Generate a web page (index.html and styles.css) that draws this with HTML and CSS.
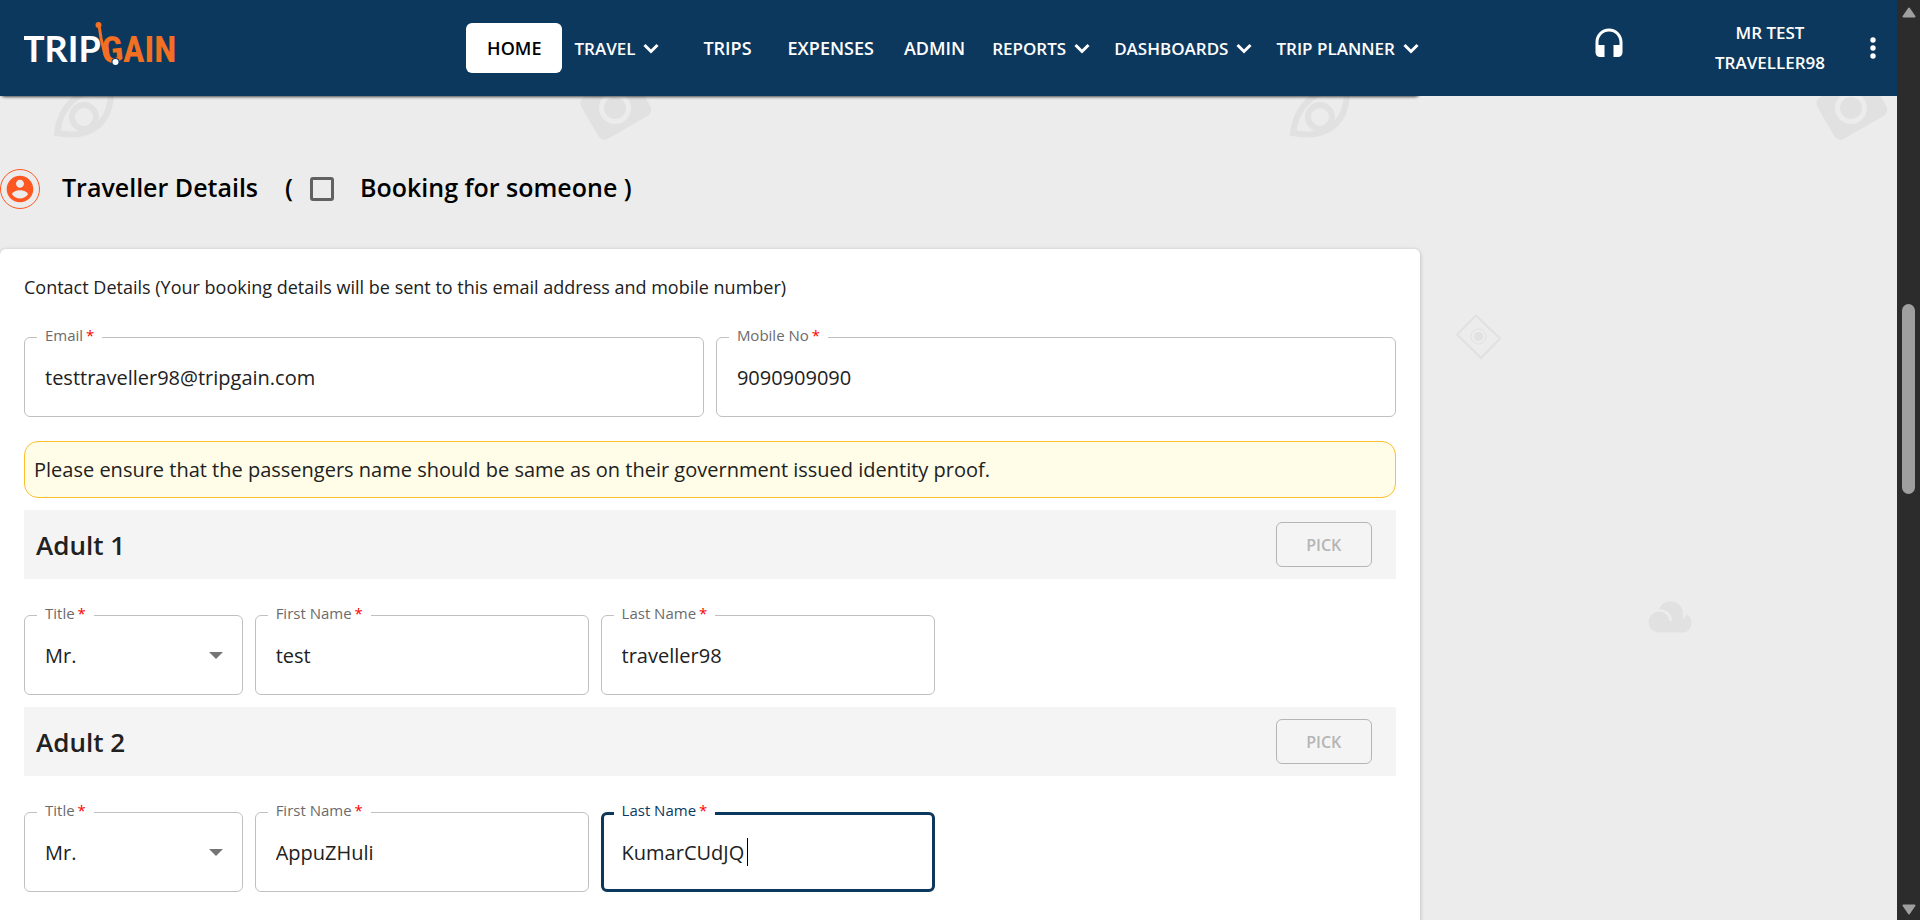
FILE: index.html
```html
<!DOCTYPE html>
<html lang="en">
<head>
<meta charset="utf-8">
<title>TripGain - Traveller Details</title>
<link rel="stylesheet" href="styles.css">
</head>
<body>
<div class="page">
  <svg class="backdrop" aria-hidden="true">
    <defs>
      <g id="eye">
        <path d="M57 133C60 108 76 88 111 88C112 122 92 140 57 133Z"/>
        <circle cx="84" cy="117" r="12"/>
      </g>
      <g id="camera">
        <rect x="-29" y="-24" width="60" height="48" rx="7" transform="translate(615 107) rotate(-30)"/>
        <circle class="lens" cx="615" cy="108" r="13.500"/>
      </g>
    </defs>
    <use href="#eye" class="eye"/>
    <use href="#eye" class="eye" x="1236"/>
    <use href="#camera" class="camera"/>
    <use href="#camera" class="camera" x="1236"/>
    <g class="diamond">
      <path d="M1476 315.500L1500 338.500L1481 358L1457 334.500Z"/>
      <circle class="ring" cx="1478.500" cy="336.500" r="7.500"/>
      <circle class="dot" cx="1478.500" cy="336.500" r="4.500"/>
    </g>
    <g class="cloud">
      <path d="M1659 609A12.500 12.500 0 0 1 1683 615Q1683 619 1682 621L1687 614.500A10 10 0 0 1 1684 632.500H1658A10.500 10.500 0 1 1 1669.500 621H1672Q1672 610 1659 609Z"/>
    </g>
  </svg>

  <header class="topbar">
    <a class="logo" href="#" aria-label="TripGain">
      <svg width="160" height="60" viewBox="0 0 160 60">
        <text class="logo-trip" x="-1" y="44">TRIP</text>
        <text class="logo-gain" x="78" y="44" transform="rotate(-6 90 32)">G</text>
        <text class="logo-gain" x="99" y="44">AIN</text>
        <path d="M75 7L77 20L81 37Q83 43.500 90 43.500" fill="none" stroke="#f36f21" stroke-width="3"/>
        <circle cx="74.500" cy="7" r="3" fill="#f36f21"/>
        <circle cx="91.500" cy="44" r="4" fill="#0d385e"/>
        <circle cx="91.500" cy="44" r="3" fill="#fff"/>
      </svg>
    </a>
    <nav class="nav">
      <a class="nav-item roomy active" href="#">HOME</a>
      <button class="nav-menu wide" type="button">TRAVEL<svg class="chevron" viewBox="0 0 16 11"><path d="M1.500 2L8 8.500L14.500 2"/></svg></button>
      <a class="nav-item roomy" href="#">TRIPS</a>
      <a class="nav-item" href="#">EXPENSES</a>
      <a class="nav-item" href="#">ADMIN</a>
      <button class="nav-menu" type="button">REPORTS<svg class="chevron" viewBox="0 0 16 11"><path d="M1.500 2L8 8.500L14.500 2"/></svg></button>
      <button class="nav-menu" type="button">DASHBOARDS<svg class="chevron" viewBox="0 0 16 11"><path d="M1.500 2L8 8.500L14.500 2"/></svg></button>
      <button class="nav-menu" type="button">TRIP PLANNER<svg class="chevron" viewBox="0 0 16 11"><path d="M1.500 2L8 8.500L14.500 2"/></svg></button>
    </nav>
    <div class="account">
      <button class="icon-button support" type="button" aria-label="Support">
        <svg width="36" height="36" viewBox="0 0 24 24"><path fill="#fff" d="M12 1c-4.970 0-9 4.030-9 9v7c0 1.660 1.340 3 3 3h3v-8H5v-2c0-3.870 3.130-7 7-7s7 3.130 7 7v2h-4v8h3c1.660 0 3-1.340 3-3v-7c0-4.970-4.030-9-9-9z"/></svg>
      </button>
      <div class="user">MR TEST<br>TRAVELLER98</div>
      <button class="icon-button" type="button" aria-label="More">
        <svg width="24" height="32" viewBox="0 0 24 32"><g fill="#fff"><circle cx="12" cy="8" r="2.700"/><circle cx="12" cy="16" r="2.700"/><circle cx="12" cy="24" r="2.700"/></g></svg>
      </button>
    </div>
  </header>

  <div class="columns">
    <main class="booking">
      <div class="panel-edge"></div>
      <div class="section-title">
        <svg class="avatar" viewBox="0 0 40 40"><circle cx="20" cy="20" r="19.500" fill="none" stroke="#ff5722"/><path fill="#ff5722" transform="translate(4 4) scale(1.333)" d="M12 2C6.480 2 2 6.480 2 12s4.480 10 10 10 10-4.480 10-10S17.520 2 12 2zm0 3c1.660 0 3 1.340 3 3s-1.340 3-3 3-3-1.340-3-3 1.340-3 3-3zm0 14.200c-2.500 0-4.710-1.280-6-3.220.030-1.990 4-3.080 6-3.080 1.990 0 5.970 1.090 6 3.080-1.290 1.940-3.500 3.220-6 3.220z"/></svg>
        <h1>Traveller Details</h1>
        <div class="someone"><span>(</span><input type="checkbox" id="someone"><label for="someone">Booking for someone )</label></div>
      </div>

      <form class="card">
        <p class="contact-note">Contact Details (Your booking details will be sent to this email address and mobile number)</p>
        <div class="fields">
          <div class="field half"><label for="email">Email <b>*</b></label><input id="email" type="text" value="testtraveller98@tripgain.com"></div>
          <div class="field half"><label for="mobile">Mobile No <b>*</b></label><input id="mobile" type="text" value="9090909090"></div>
        </div>
        <p class="notice">Please ensure that the passengers name should be same as on their government issued identity proof.</p>

        <div class="adult-bar"><h2>Adult 1</h2><button class="pick" type="button" disabled>PICK</button></div>
        <div class="fields">
          <div class="field title"><label for="title1">Title <b>*</b></label><select id="title1"><option>Mr.</option></select><svg class="arrow" viewBox="0 0 14 7"><path d="M0 0H14L7 7Z"/></svg></div>
          <div class="field name"><label for="first1">First Name <b>*</b></label><input id="first1" type="text" value="test"></div>
          <div class="field name"><label for="last1">Last Name <b>*</b></label><input id="last1" type="text" value="traveller98"></div>
        </div>

        <div class="adult-bar"><h2>Adult 2</h2><button class="pick" type="button" disabled>PICK</button></div>
        <div class="fields">
          <div class="field title"><label for="title2">Title <b>*</b></label><select id="title2"><option>Mr.</option></select><svg class="arrow" viewBox="0 0 14 7"><path d="M0 0H14L7 7Z"/></svg></div>
          <div class="field name"><label for="first2">First Name <b>*</b></label><input id="first2" type="text" value="AppuZHuli"></div>
          <div class="field name focused"><label for="last2">Last Name <b>*</b></label><input id="last2" type="text" value="KumarCUdJQ"><i class="caret"></i></div>
        </div>
      </form>
    </main>
    <aside></aside>
  </div>
</div>
<div class="scrollbar" aria-hidden="true">
  <svg width="14" height="11" viewBox="0 0 14 11"><path d="M7 1.500L12.500 9.500H1.500Z"/></svg>
  <div class="track"><div class="thumb"></div></div>
  <svg width="14" height="11" viewBox="0 0 14 11"><path d="M7 9.500L12.500 1.500H1.500Z"/></svg>
</div>
</body>
</html>
```
FILE: styles.css
```css
* { box-sizing: border-box; }

body {
  margin: 0;
  display: flex;
  height: 100vh;
  overflow: hidden;
  font-family: "Open Sans", "Noto Sans", sans-serif;
  color: #212121;
}

h1, h2, p { margin: 0; }

button, input, select { font: inherit; color: inherit; }

.page {
  position: relative;
  flex: 1;
  min-width: 0;
  display: flex;
  flex-direction: column;
  background: #ececec;
  overflow: hidden;
}

.backdrop {
  position: absolute;
  inset: 0;
  width: 100%;
  height: 100%;
}
.eye { fill: none; stroke: #e1e1e1; stroke-width: 6; }
.camera { fill: #e1e1e1; }
.lens { stroke: #ececec; stroke-width: 5; }
.diamond { fill: none; stroke: #e1e1e1; stroke-width: 2; }
.diamond .ring { stroke-width: 1; }
.diamond .dot { fill: #e1e1e1; stroke: none; }
.cloud { fill: #e1e1e1; }

/* Top bar */
.topbar {
  position: relative;
  z-index: 2;
  flex: none;
  display: grid;
  grid-template-columns: 1fr auto 1fr;
  align-items: center;
  height: 96px;
  background: #0d385e;
  color: #fff;
}
.logo { margin-left: 24px; display: flex; width: 160px; }
.logo-trip { font: 700 36px Lato, sans-serif; fill: #fff; }
.logo-gain { font: 700 36px "Liberation Sans Narrow", "Roboto Condensed", sans-serif; fill: #f36f21; }

.nav { display: flex; align-items: center; }
.nav-item, .nav-menu {
  display: flex;
  align-items: center;
  height: 50px;
  font-weight: 600;
  color: #fff;
  text-decoration: none;
  white-space: nowrap;
}
.nav-item { padding: 0 15px; font-size: 18px; }
.nav-item.roomy { padding: 0 21px; }
.nav-item.active { background: #fff; color: #000; border-radius: 6px; }
.nav-menu { padding: 0 12px; gap: 8px; border: 0; background: none; font-size: 17px; }
.nav-menu.wide { min-width: 120px; }
.chevron { width: 16px; height: 11px; fill: none; stroke: #fff; stroke-width: 3; }

.account { display: flex; align-items: center; justify-content: flex-end; padding-right: 12px; }
.icon-button { display: flex; padding: 0; border: 0; background: none; }
.support { margin: 0 88px 6px 0; }
.user { margin-right: 36px; font-size: 17px; font-weight: 600; line-height: 30px; text-align: center; }

/* Content */
.columns {
  position: relative;
  flex: 1;
  min-height: 0;
  display: grid;
  grid-template-columns: minmax(0, 3fr) minmax(0, 1fr);
  column-gap: 4px;
}
.booking { display: flex; flex-direction: column; }
.panel-edge {
  flex: none;
  height: 10px;
  margin-top: -10px;
  border-radius: 6px;
  background: #fff;
  box-shadow: 0 1px 3px rgba(0, 0, 0, .7);
}
.section-title {
  display: flex;
  align-items: center;
  padding: 73px 0 40px;
  color: #000;
}
.avatar { width: 40px; height: 40px; margin-right: 22px; }
.section-title h1, .someone { font-size: 25px; font-weight: 600; line-height: 36px; margin-bottom: 4px; }
.someone { display: flex; align-items: center; margin-left: 27px; }
.someone input {
  appearance: none;
  width: 24px;
  height: 24px;
  margin: 4px 26px 0 17px;
  border: 3px solid #616161;
  border-radius: 3px;
}

.card {
  flex: 1 0 auto;
  padding: 24px 24px 60px;
  background: #fff;
  border-radius: 6px;
  box-shadow: 0 1px 4px rgba(0, 0, 0, .25);
}
.contact-note { font-size: 18px; line-height: 28px; }
.fields {
  display: grid;
  grid-template-columns: repeat(12, minmax(0, 1fr));
  gap: 12px;
  padding-top: 36px;
}
.field { position: relative; }
.half { grid-column: span 6; }
.title { grid-column: span 2; }
.name { grid-column: span 3; }
.field label {
  position: absolute;
  top: -12px;
  left: 13px;
  padding: 0 8px;
  background: #fff;
  color: #6b6b6b;
  font-size: 15px;
  line-height: 20px;
}
.field b { margin-left: -1px; font-weight: 400; color: #f00; }
.field input, .field select {
  appearance: none;
  display: block;
  width: 100%;
  height: 80px;
  padding: 0 20px;
  border: 1px solid #c0c0c0;
  border-radius: 6px;
  background: #fff;
  font-size: 20px;
  outline: 0;
}
.arrow { position: absolute; right: 20px; top: 37px; width: 14px; height: 7px; fill: #757575; }
.field.focused input { border: 3px solid #0d385e; padding: 0 18px; }
.field.focused label { color: #0d385e; }
.caret { position: absolute; left: 146px; top: 26px; width: 1px; height: 28px; background: #000; }

.notice {
  margin: 24px 0 12px;
  padding: 14px 9px;
  border: 1px solid #fbc02d;
  border-radius: 14px;
  background: #fffde7;
  font-size: 20px;
  line-height: 27px;
}
.adult-bar {
  display: flex;
  align-items: center;
  justify-content: space-between;
  margin-top: 12px;
  padding: 12px 24px 12px 12px;
  background: #f4f4f4;
}
.adult-bar h2 { font-size: 26px; font-weight: 600; line-height: 36px; }
.pick {
  width: 96px;
  height: 45px;
  border: 1px solid #b5b5b5;
  border-radius: 6px;
  background: none;
  color: #b5b5b5;
  font-size: 16px;
  font-weight: 600;
}

/* Scrollbar */
.scrollbar {
  flex: none;
  width: 23px;
  display: flex;
  flex-direction: column;
  align-items: center;
  padding: 7px 0 5px;
  background: #2c2c2c;
}
.scrollbar svg { fill: #9f9f9f; stroke: #9f9f9f; stroke-width: 2; stroke-linejoin: round; }
.track { flex: 1; display: flex; flex-direction: column; padding-top: 286px; }
.thumb { width: 13px; height: 190px; border-radius: 7px; background: #9f9f9f; }
```
